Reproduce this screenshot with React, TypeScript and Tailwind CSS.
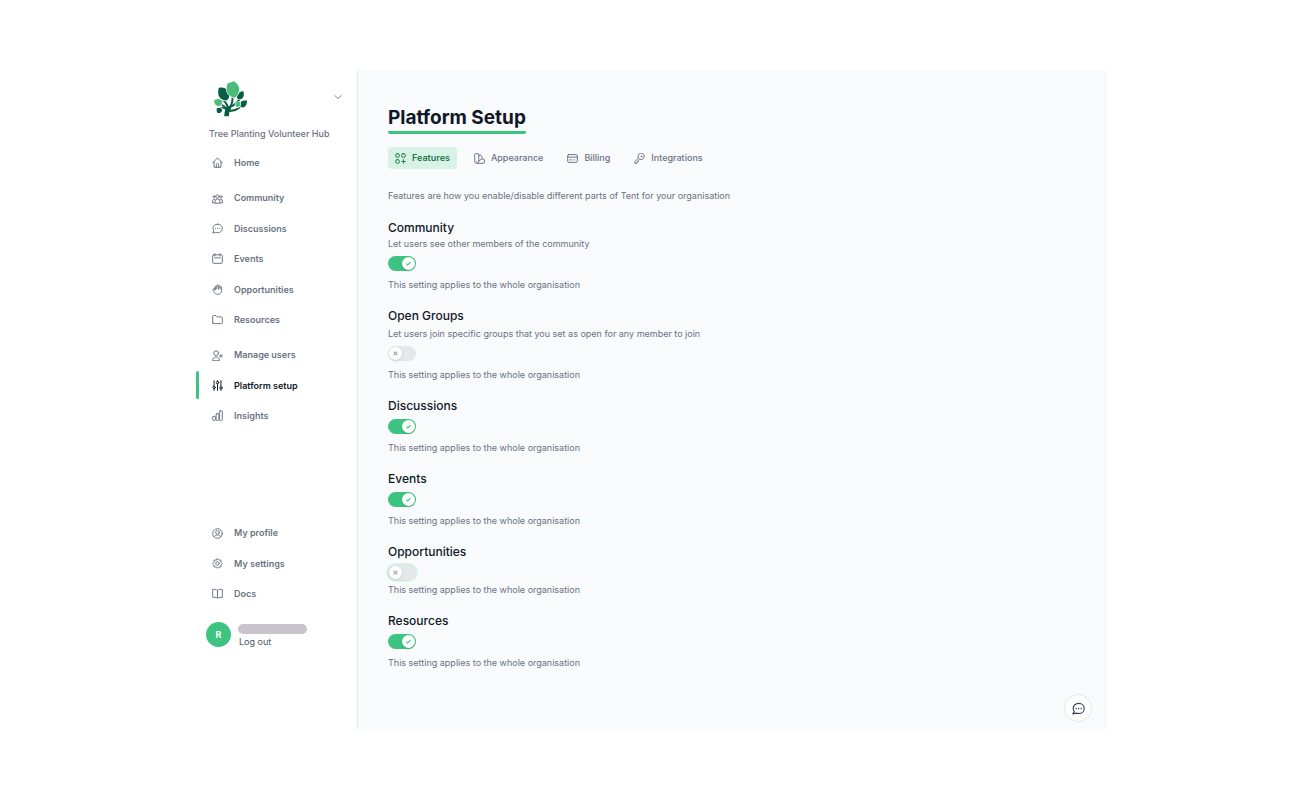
import { useState } from "react";
import type { ReactNode } from "react";

type IconProps = { children: ReactNode; className?: string };

function Icon({ children, className = "size-[11px]" }: IconProps) {
  return (
    <svg
      viewBox="0 0 24 24"
      fill="none"
      stroke="currentColor"
      strokeWidth="2.1"
      strokeLinecap="round"
      strokeLinejoin="round"
      aria-hidden="true"
      className={`${className} shrink-0`}
    >
      {children}
    </svg>
  );
}

const chatPaths = (
  <>
    <path d="M12.500 2.500C6.700 2.500 2.200 6.500 2.200 11.600c0 2.200.7 4.100 1.900 5.700L1.500 22l6.500-1.400c1.400.5 2.900.7 4.500.7 5.800 0 10-4.200 10-9.500S18.300 2.500 12.500 2.500z" />
    <path d="M7.700 12h.1M12.300 12h.1M16.900 12h.1" strokeWidth="2.500" />
  </>
);

const icons = {
  home: (
    <>
      <path d="M1.500 13 12 2l10.500 11" />
      <path d="M4.500 10.500v12h15v-12" />
      <path d="M9.500 22v-5.500a2.500 2.500 0 0 1 5 0V22" />
    </>
  ),
  community: (
    <>
      <circle cx="12" cy="7.500" r="3.600" />
      <circle cx="4.500" cy="8" r="2.200" />
      <circle cx="19.500" cy="8" r="2.200" />
      <path d="M6.500 21.500v-3a5.500 5.500 0 0 1 11 0v3z" />
      <path d="M5.500 13.500A4 4 0 0 0 1.200 17.500v4H6M18.500 13.500a4 4 0 0 1 4.300 4v4H18" />
    </>
  ),
  chat: chatPaths,
  events: (
    <>
      <rect x="1.500" y="4" width="21" height="18.500" rx="1.800" />
      <path d="M6.500 1.500v5M17.500 1.500v5M6 10.500h12" />
    </>
  ),
  hand: (
    <path d="M7 12V5.500a1.800 1.800 0 0 1 3.500 0V11M10.500 5V3.300a1.800 1.800 0 0 1 3.500 0V11M14 4.500a1.800 1.800 0 0 1 3.500 0V11M17.500 7.500a1.700 1.700 0 0 1 3.400 0V14c0 5-3.400 8.700-8.200 8.700-4.500 0-7.300-2.500-8.700-6.200L2.300 12c-.3-1.200.3-2 1.200-2.300 1-.3 1.800.2 2.200 1.100L7 13.500V7" />
  ),
  folder: (
    <path d="M1.500 19V5a1.500 1.500 0 0 1 1.500-1.500h5.500l3 3H21A1.500 1.500 0 0 1 22.500 8v11.500A1.500 1.500 0 0 1 21 21H3a1.500 1.500 0 0 1-1.500-2z" />
  ),
  userPlus: (
    <>
      <circle cx="9" cy="7" r="5.200" />
      <path d="M1.500 22.500c0-4.500 3.200-7 7.500-7s7.500 2.500 7.500 7zM19.500 9.500v7M16.200 13H22.800" />
    </>
  ),
  sliders: (
    <>
      <path d="M4.500 1.500v12M4.500 19v3.500M12 1.500V3M12 8.500v14M19.500 1.500v13M19.500 20v2.500" />
      <circle cx="4.500" cy="16.200" r="2.700" />
      <circle cx="12" cy="5.700" r="2.700" />
      <circle cx="19.500" cy="17.200" r="2.700" />
    </>
  ),
  chart: (
    <>
      <rect x="1.500" y="14" width="6" height="8.500" rx="1.200" />
      <rect x="9" y="8" width="6" height="14.500" rx="1.200" />
      <rect x="16.500" y="2" width="6" height="20.500" rx="1.200" />
    </>
  ),
  profile: (
    <>
      <circle cx="12" cy="12" r="10.500" />
      <circle cx="12" cy="9.500" r="4" />
      <path d="M4.500 19c1.500-2.400 4.200-3.800 7.500-3.800s6 1.400 7.500 3.800" />
    </>
  ),
  gear: (
    <>
      <circle cx="12" cy="12" r="3.800" />
      <path d="m12 1.500 2.900 3 4.500-.1v4.400l3.100 3.200-3.100 3.200v4.400l-4.500-.1-2.900 3-2.900-3-4.500.1v-4.400L1.500 12l3.100-3.200V4.400l4.500.1z" />
    </>
  ),
  book: (
    <path d="M12 5v17C9 20.300 5 20 1.500 20.500V3C5 2.500 9 3 12 5c3-2 7-2.500 10.500-2v17.500C19 20 15 20.300 12 22" />
  ),
  features: (
    <>
      <rect x="1.500" y="1.500" width="8" height="8" rx="3.200" />
      <rect x="14.500" y="1.500" width="8" height="8" rx="3.200" />
      <rect x="1.500" y="14.500" width="8" height="8" rx="3.200" />
      <path d="M18.500 14.500v8M14.500 18.500h8" />
    </>
  ),
  swatch: (
    <>
      <path d="M1.500 3A1.500 1.500 0 0 1 3 1.500h6A1.500 1.500 0 0 1 10.500 3v15a4.500 4.500 0 0 1-9 0z" />
      <path d="M10.500 5.500 13 4.200a1.500 1.500 0 0 1 2 .6l3 5.400a1.500 1.500 0 0 1-.5 2L10 18" />
      <path d="M18 13.500h3a1.500 1.500 0 0 1 1.500 1.500v6a1.500 1.500 0 0 1-1.500 1.500H6M6 18h.1" />
    </>
  ),
  card: (
    <>
      <rect x="1.500" y="3.500" width="21" height="17" rx="2.500" />
      <path d="M1.500 9h21" />
      <path d="M6 15h4M15 15h2" />
    </>
  ),
  key: (
    <>
      <path d="M9.700 11.200 1.700 19v3.500h4.500v-3h3v-3l3.400-2.800A6.900 6.900 0 1 0 9.700 11.200z" />
      <circle cx="16.500" cy="7.500" r="1" />
    </>
  ),
};

type IconName = keyof typeof icons;
type NavEntry = { label: string; icon: IconName; active?: boolean };

const communityNav: NavEntry[] = [
  { label: "Community", icon: "community" },
  { label: "Discussions", icon: "chat" },
  { label: "Events", icon: "events" },
  { label: "Opportunities", icon: "hand" },
  { label: "Resources", icon: "folder" },
];

const adminNav: NavEntry[] = [
  { label: "Manage users", icon: "userPlus" },
  { label: "Platform setup", icon: "sliders", active: true },
  { label: "Insights", icon: "chart" },
];

const accountNav: NavEntry[] = [
  { label: "My profile", icon: "profile" },
  { label: "My settings", icon: "gear" },
  { label: "Docs", icon: "book" },
];

const tabs: NavEntry[] = [
  { label: "Features", icon: "features", active: true },
  { label: "Appearance", icon: "swatch" },
  { label: "Billing", icon: "card" },
  { label: "Integrations", icon: "key" },
];

function NavGroup({ items, className }: { items: NavEntry[]; className: string }) {
  return (
    <ul className={`grid auto-rows-fr ${className}`}>
      {items.map((item) => (
        <li key={item.label} className="flex items-center">
          <a
            href="#"
            aria-current={item.active ? "page" : undefined}
            className={`flex h-7 w-full items-center gap-[11px] text-[9px] font-semibold ${
              item.active ? "text-gray-900" : "text-gray-500"
            }`}
          >
            <span className={`mr-[2px] h-full w-[3px] rounded-full ${item.active ? "bg-[#3cc480]" : "bg-transparent"}`} />
            <Icon>{icons[item.icon]}</Icon>
            {item.label}
          </a>
        </li>
      ))}
    </ul>
  );
}

function TreeLogo() {
  return (
    <svg viewBox="71 47 100 107" className="h-9 w-[33px]" role="img" aria-label="Tree Planting Volunteer Hub">
      <g fill="none" stroke="#075e45" strokeLinecap="round">
        <path d="M109 153c0-13 2-20 9-28" strokeWidth="14" strokeLinecap="butt" />
        <path d="M116 130c8-9 11-18 11-31" strokeWidth="6" />
        <path d="M113 130c-1-12-6-19-13-25" strokeWidth="6" />
        <path d="M118 125c14-5 24-12 31-25" strokeWidth="6" />
        <path d="M114 137c16 0 28-5 38-14" strokeWidth="6" />
        <path d="M109 134c-6-8-11-9-17-6M108 130c-4-7-9-11-15-13" strokeWidth="5" />
      </g>
      <g fill="#075e45" stroke="#fff" strokeWidth="4" style={{ paintOrder: "stroke" }}>
        <path d="M85 67c6-1 12-2 19 1 9 4 13 11 13 20 0 7-2 13-8 17-9 0-18-3-22-11-5-9-3-19-2-27z" />
        <path d="M160 77c3 10 2 19-5 23-5 2-10 1-14-2-3-10 1-19 19-21z" />
        <path d="M148 118c1-10 10-14 23-13 0 12-4 20-12 21-5 0-10-3-11-8z" />
        <path d="M79 130c5-5 13-4 17 2-1 8-6 12-14 11-3-3-3-8-3-13z" />
      </g>
      <g fill="#4bbd79" stroke="#fff" strokeWidth="4" style={{ paintOrder: "stroke" }}>
        <path d="M111 55c5-4 13-4 20-8 6 4 11 8 14 14 5 11 1 23-6 31-3 3-5 4-7 5-9-3-18-8-21-18-3-9-1-16 0-24z" />
        <path d="M71 105c11-7 22-6 25 4 0 7-4 11-10 13-9 0-14-6-15-17z" />
        <path d="M149 109c3 8 1 15-5 17-6-1-9-6-8-10 2-5 6-7 13-7z" />
      </g>
    </svg>
  );
}

type Feature = {
  id: string;
  title: string;
  description?: string;
  descriptionClass?: string;
  noteClass?: string;
  enabled: boolean;
  highlighted?: boolean;
};

const features: Feature[] = [
  {
    id: "community",
    title: "Community",
    description: "Let users see other members of the community",
    descriptionClass: "mt-px",
    enabled: true,
  },
  {
    id: "open-groups",
    title: "Open Groups",
    description: "Let users join specific groups that you set as open for any member to join",
    descriptionClass: "mt-[3px]",
    enabled: false,
  },
  { id: "discussions", title: "Discussions", enabled: true },
  { id: "events", title: "Events", enabled: true },
  { id: "opportunities", title: "Opportunities", noteClass: "mt-[3px]", enabled: false, highlighted: true },
  { id: "resources", title: "Resources", enabled: true },
];

function FeatureSetting({ feature }: { feature: Feature }) {
  const [on, setOn] = useState(feature.enabled);
  return (
    <section>
      <h2 className="text-[12px] leading-4 font-medium text-gray-900">
        <label htmlFor={feature.id}>{feature.title}</label>
      </h2>
      {feature.description && (
        <p className={`text-[9px] leading-[14px] text-gray-500 ${feature.descriptionClass ?? ""}`}>
          {feature.description}
        </p>
      )}
      <div className="relative mt-[5px] h-[15px] w-7">
        <input
          id={feature.id}
          type="checkbox"
          role="switch"
          checked={on}
          onChange={(event) => setOn(event.target.checked)}
          className={`block h-[15px] w-7 cursor-pointer appearance-none rounded-full bg-gray-200 checked:bg-[#3cc480] ${
            feature.highlighted ? "shadow-[0_0_2px_1px_#b5ebcf]" : ""
          }`}
        />
        <span
          className={`pointer-events-none absolute top-px flex size-[13px] items-center justify-center rounded-full bg-white shadow-sm ${
            on ? "right-px text-[#3cc480]" : "left-px text-gray-400"
          }`}
        >
          <svg viewBox="0 0 12 12" fill="none" stroke="currentColor" strokeWidth="2.6" className="size-[5px]" aria-hidden="true">
            {on ? <path d="m1 6.500 3 3 7-7" /> : <path d="m1.500 1.500 9 9M10.500 1.500l-9 9" />}
          </svg>
        </span>
      </div>
      <p className={`text-[9px] leading-[14px] text-gray-500 ${feature.noteClass ?? "mt-[7px]"}`}>
        This setting applies to the whole organisation
      </p>
    </section>
  );
}

export default function App() {
  return (
    <div className="min-h-screen bg-white px-4 py-[70px] font-['Inter',sans-serif]">
      <div className="mx-auto flex w-full max-w-[911px]">
        <aside className="flex w-[162px] shrink-0 flex-col border-r border-[#e8eaef] pt-[11px] pb-[82px]">
          <button type="button" aria-label="Switch organisation" className="flex items-center justify-between pr-[15px] pl-[18px]">
            <TreeLogo />
            <Icon className="mb-1 size-2 text-gray-500">
              <path d="m2.500 7.500 9.500 9 9.500-9" strokeWidth="2.700" />
            </Icon>
          </button>
          <p className="mt-[10px] pl-[13px] text-[9px] leading-[14px] font-medium whitespace-nowrap text-gray-500">
            Tree Planting Volunteer Hub
          </p>
          <nav aria-label="Main" className="mt-[6px] flex flex-col gap-[5px]">
            <NavGroup items={[{ label: "Home", icon: "home" }]} className="min-h-[31px]" />
            <NavGroup items={communityNav} className="min-h-[152px]" />
            <NavGroup items={adminNav} className="min-h-[91px]" />
          </nav>
          <div className="mt-auto">
            <NavGroup items={accountNav} className="min-h-[91px]" />
            <div className="mt-[13px] flex items-start gap-[7px] pl-[10px]">
              <span className="flex size-[25px] items-center justify-center rounded-full bg-[#3cc480] text-[9px] font-bold text-white">
                R
              </span>
              <div className="pt-[2px]">
                <div className="h-[10px] w-[69px] rounded-full bg-[#c9c3cb]" />
                <a href="#" className="-mb-[2px] block pl-px text-[9px] leading-[15px] text-gray-600">
                  Log out
                </a>
              </div>
            </div>
          </div>
        </aside>

        <main className="relative min-w-0 flex-1 bg-[#f9fafc] pt-9 pb-[59px] pl-[30px]">
          <h1 className="w-fit rounded-b-[2px] border-b-[3px] border-[#3cc480] pb-px text-[19px] leading-6 font-bold text-gray-900">
            Platform Setup
          </h1>
          <nav aria-label="Setup sections" className="mt-[13px] flex gap-[10px]">
            {tabs.map((tab) => (
              <a
                key={tab.label}
                href="#"
                aria-current={tab.active ? "page" : undefined}
                className={`flex h-[22px] items-center gap-[6px] rounded px-[7px] text-[9px] ${
                  tab.active ? "bg-[#d8f3e6] font-semibold text-[#1c7a4c]" : "font-medium text-gray-500"
                }`}
              >
                <Icon>{icons[tab.icon]}</Icon>
                {tab.label}
              </a>
            ))}
          </nav>
          <p className="mt-5 text-[9px] leading-[14px] text-gray-500">
            Features are how you enable/disable different parts of Tent for your organisation
          </p>
          <div className="mt-[17px] flex flex-col gap-4">
            {features.map((feature) => (
              <FeatureSetting key={feature.id} feature={feature} />
            ))}
          </div>
          <button
            type="button"
            aria-label="Open chat"
            className="absolute right-[15px] bottom-[7px] flex size-7 items-center justify-center rounded-full border border-gray-200 bg-white text-gray-700"
          >
            <Icon className="size-[13px]">{chatPaths}</Icon>
          </button>
        </main>
      </div>
    </div>
  );
}
